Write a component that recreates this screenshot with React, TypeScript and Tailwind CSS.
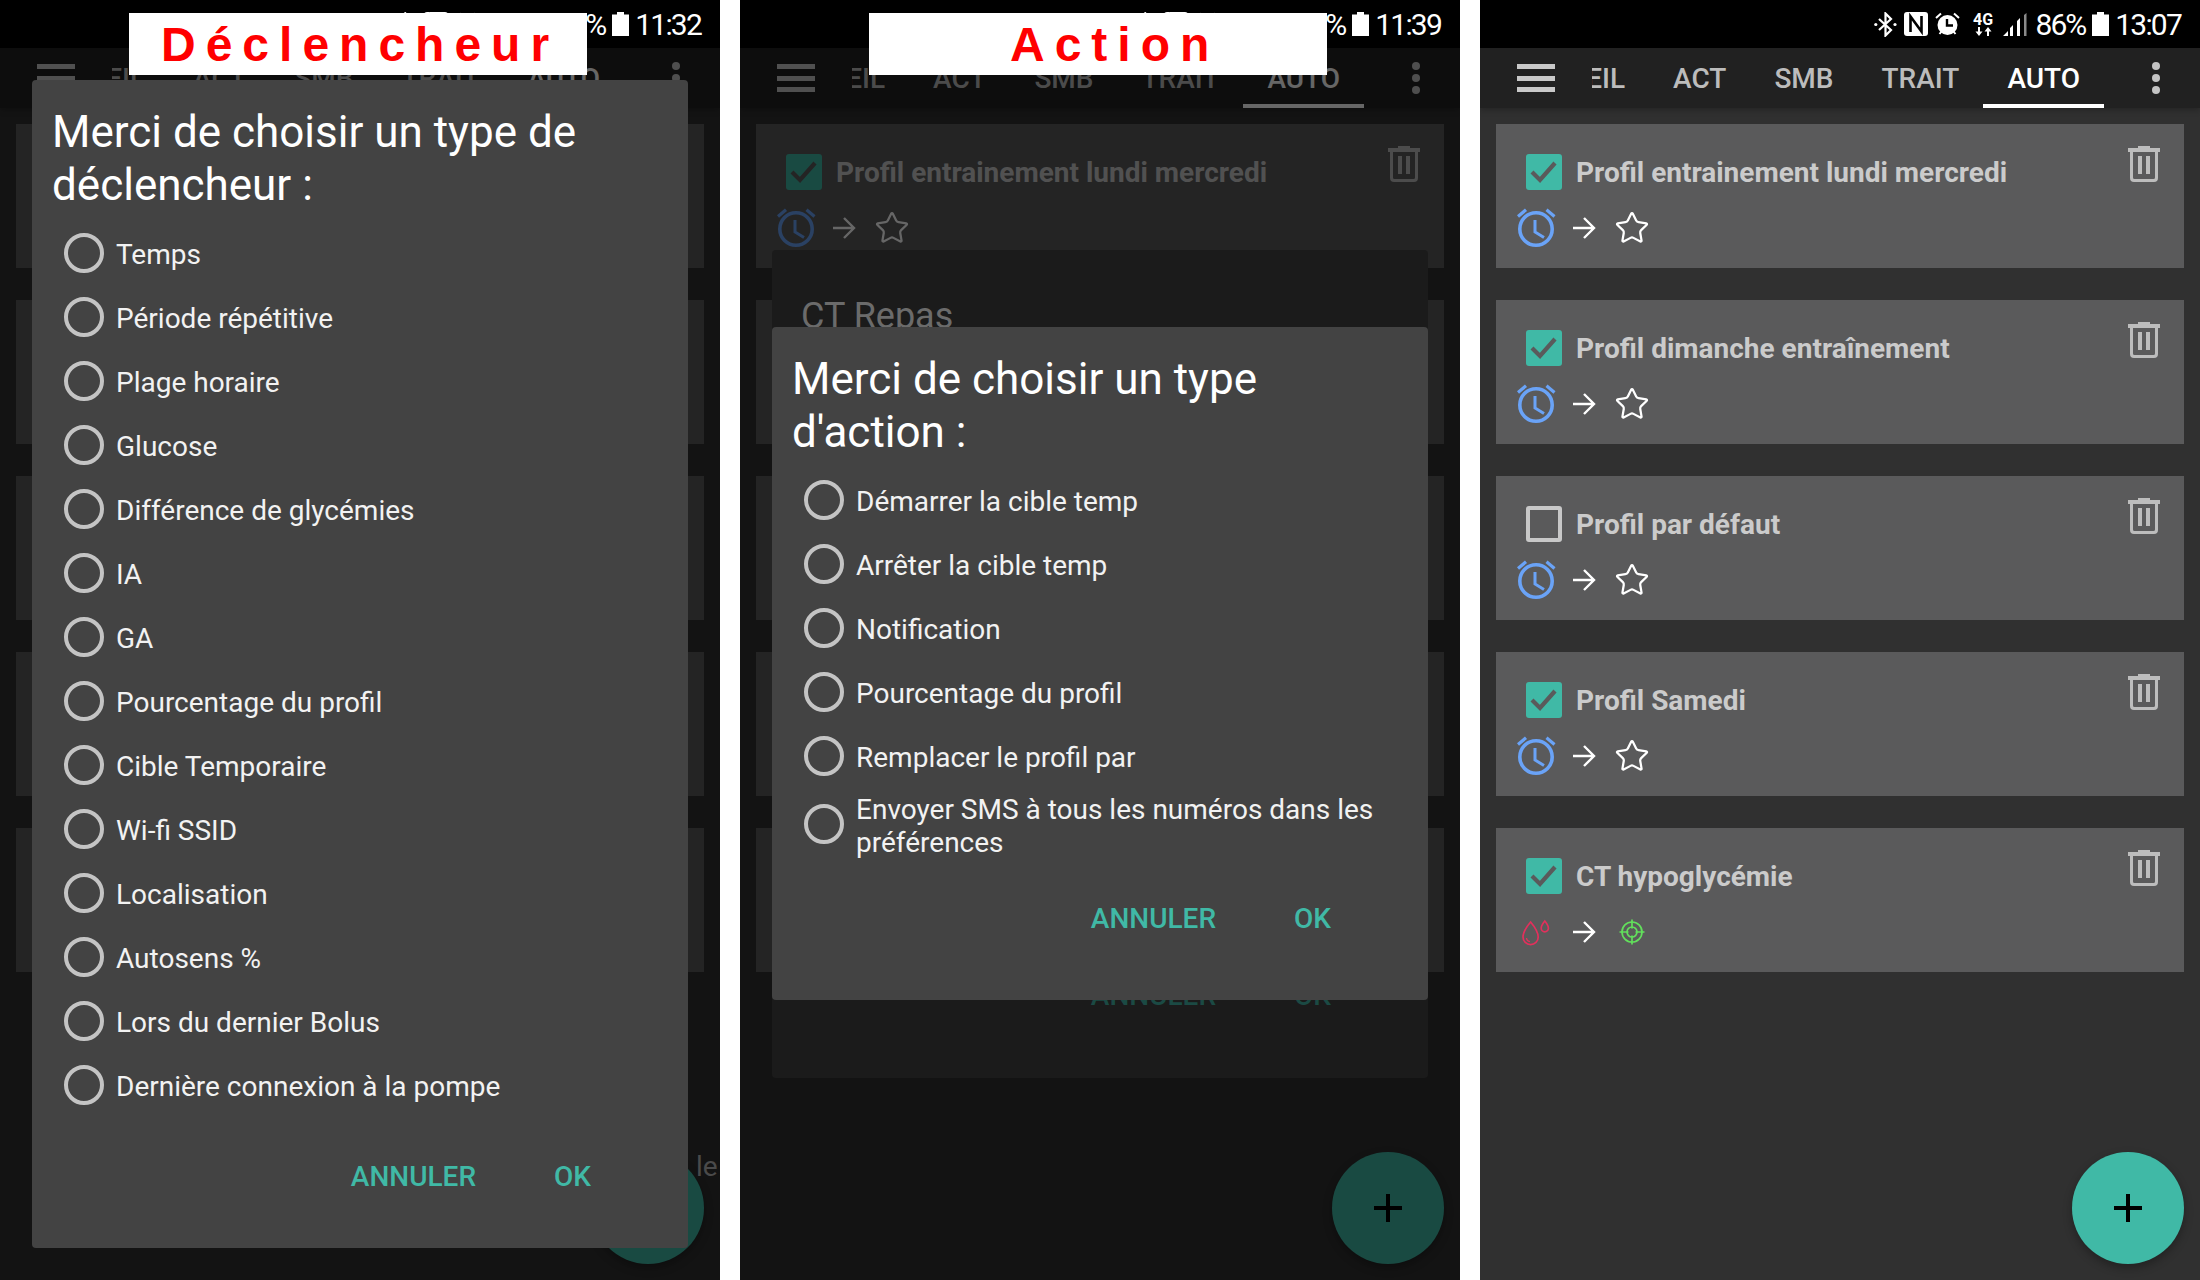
import { Star } from 'lucide-react'

const roboto = 'font-["Roboto",sans-serif]'

const cards = [
  { name: 'Profil entrainement lundi mercredi', on: true },
  { name: 'Profil dimanche entraînement', on: true },
  { name: 'Profil par défaut', on: false },
  { name: 'Profil Samedi', on: true },
  { name: 'CT hypoglycémie', on: true, hypo: true },
]

const tabs = ['ACCUEIL', 'ACT', 'SMB', 'TRAIT', 'AUTO']

const triggers = [
  'Temps',
  'Période répétitive',
  'Plage horaire',
  'Glucose',
  'Différence de glycémies',
  'IA',
  'GA',
  'Pourcentage du profil',
  'Cible Temporaire',
  'Wi-fi SSID',
  'Localisation',
  'Autosens %',
  'Lors du dernier Bolus',
  'Dernière connexion à la pompe',
]

const actions = [
  'Démarrer la cible temp',
  'Arrêter la cible temp',
  'Notification',
  'Pourcentage du profil',
  'Remplacer le profil par',
]

function AlarmIcon() {
  return (
    <svg width="40" height="40" viewBox="0 0 40 40" fill="none" stroke="#6aa3f7" strokeWidth="3.6">
      <circle cx="19" cy="22" r="16.2" />
      <path d="M1 9.5 9 2.8M29.5 2.8 37.5 9.5" strokeWidth="3.2" />
      <path d="M18 13v12l9 5.5" strokeWidth="3" />
    </svg>
  )
}

function DropsIcon() {
  return (
    <svg width="40" height="40" viewBox="0 0 40 40" fill="none" stroke="#e2305c" strokeWidth="1.7">
      <path d="M13.6 11C13.6 11 6 20 6 26a7.6 7.6 0 0 0 15.2 0C21.2 20 13.6 11 13.6 11Z" />
      <path d="M9.5 27a4 4 0 0 0 3.5 3.6" strokeWidth="1.2" />
      <path d="M27.8 10C27.8 10 24.2 14.5 24.2 17.2a3.6 3.6 0 0 0 7.2 0C31.4 14.5 27.8 10 27.8 10Z" />
    </svg>
  )
}

function ArrowIcon() {
  return (
    <svg width="24" height="24" viewBox="0 0 24 24" fill="none" stroke="white" strokeWidth="2.4">
      <path d="M1 12h21M12 2l10 10-10 10" />
    </svg>
  )
}

function TargetIcon() {
  return (
    <svg width="30" height="30" viewBox="0 0 30 30" fill="none" stroke="#62e05c" strokeWidth="1.7">
      <circle cx="15" cy="15" r="10" />
      <circle cx="15" cy="15" r="5" />
      <path d="M15 2.5v9M15 18.5v9M2.5 15h9M18.5 15h9" />
    </svg>
  )
}

function TrashIcon() {
  return (
    <svg width="32" height="36" viewBox="0 0 32 36" fill="#bdbdbd">
      <path d="M10 0h12v2h10v4H0V2h10z" />
      <path d="M2 6h3v25.5q0 1.5 1.5 1.5h19q1.5 0 1.5-1.5V6h3v26q0 4-4 4H6q-4 0-4-4z" />
      <path d="M10 10h4v18h-4zM18 10h4v18h-4z" />
    </svg>
  )
}

function CheckBox({ on }: { on: boolean }) {
  if (!on) {
    return <div className="w-[36px] h-[36px] shrink-0 rounded-[3px] border-4 border-[#c8c8c8]" />
  }
  return (
    <div className="w-[36px] h-[36px] shrink-0 rounded-[3px] bg-[#40b9a6] flex items-center justify-center">
      <svg width="28" height="24" viewBox="0 0 28 24" fill="none" stroke="#5a5a5b" strokeWidth="4.2">
        <path d="M2 12l8 8L25 3" />
      </svg>
    </div>
  )
}

function StatusBar({ time }: { time: string }) {
  return (
    <div className="h-[48px] bg-black flex items-center justify-end pr-[19px] text-white">
      <svg width="23" height="25" viewBox="0 0 23 25" fill="none" stroke="white" strokeWidth="2.2" className="mr-[7px]">
        <path d="M5 7l12 11-5.5 5.5V1.5L17 7 5 18" />
        <circle cx="1.8" cy="12.5" r="1.6" fill="white" stroke="none" />
        <circle cx="21" cy="12.5" r="1.6" fill="white" stroke="none" />
      </svg>
      <svg width="24" height="24" viewBox="0 0 24 24" className="mr-[7px]">
        <rect width="24" height="24" rx="3" fill="white" />
        <path d="M6.5 20V4.5L17.5 19.5V4" fill="none" stroke="black" strokeWidth="2.6" />
      </svg>
      <svg width="25" height="24" viewBox="0 0 25 24" className="mr-[14px]">
        <circle cx="12.5" cy="13" r="10" fill="white" />
        <path d="M1 6l5-4.5M19 1.5 24 6M4.5 22l2-2.5M20.5 22l-2-2.5" stroke="white" strokeWidth="2" />
        <path d="M12 7v6.5h6" fill="none" stroke="black" strokeWidth="2.4" />
      </svg>
      <div className={`${roboto} w-[19px] mr-[10px] flex flex-col items-center`}>
        <span className="text-[16px] font-bold leading-[14px]">4G</span>
        <svg width="17" height="9" viewBox="0 0 17 9" fill="white">
          <path d="M3 0h2v4.5h2.5L4 9 .5 4.500H3zM12 9h2V4.500h2.500L13 0 9.500 4.500H12z" />
        </svg>
      </div>
      <svg width="24" height="23" viewBox="0 0 24 23" className="mr-[9px]">
        <path d="M0 23l5-5v5zM7 23V15l3-3v11zM14 23V8l3-3v18z" fill="white" />
        <path d="M21 23V2l2.5-2v23z" fill="#8a8a8a" />
      </svg>
      <span className={`${roboto} pt-[1px] text-[30px] font-normal tracking-[-2px] leading-none`}>86%</span>
      <svg width="17" height="24" viewBox="0 0 17 24" className="ml-[7px] mr-[6px]">
        <path d="M5 0h7v2.500h5V24H0V2.500h5z" fill="white" />
      </svg>
      <span className={`${roboto} pt-[1px] text-[30px] font-normal tracking-[-1.8px] leading-none`}>{time}</span>
    </div>
  )
}

function Toolbar() {
  return (
    <div className="h-[60px] bg-[#212121] flex items-stretch shadow-[0_2px_6px_rgba(0,0,0,0.25)] relative">
      <div className="ml-[37px] w-[38px] my-[16px] flex flex-col justify-between">
        <div className="h-[5px] bg-[#c9c9c9]" />
        <div className="h-[5px] bg-[#c9c9c9]" />
        <div className="h-[5px] bg-[#c9c9c9]" />
      </div>
      <div className="ml-[37px] w-[512px] overflow-hidden flex justify-end">
        {tabs.map((tab) => (
          <div
            key={tab}
            className={`${roboto} shrink-0 px-[24px] pt-[2px] flex items-center border-y-4 border-t-transparent text-[28px] font-medium ${
              tab === 'AUTO' ? 'border-b-white text-white' : 'border-b-transparent text-[#bcbcbc]'
            }`}
          >
            {tab}
          </div>
        ))}
      </div>
      <div className="ml-[48px] flex flex-col justify-center gap-[4px]">
        <div className="w-[8px] h-[8px] rounded-full bg-[#c4c4c4]" />
        <div className="w-[8px] h-[8px] rounded-full bg-[#c4c4c4]" />
        <div className="w-[8px] h-[8px] rounded-full bg-[#c4c4c4]" />
      </div>
    </div>
  )
}

function ProfileCard({ name, on, hypo }: { name: string; on: boolean; hypo?: boolean }) {
  return (
    <div className="h-[144px] bg-[#5a5a5b] pt-[30px] relative">
      <div className="flex items-center pl-[30px]">
        <CheckBox on={on} />
        <span className={`${roboto} ml-[14px] pt-[2px] text-[28px] font-bold leading-[34px] text-[#cbcbcb]`}>{name}</span>
      </div>
      <div className="absolute right-[24px] top-[22px]">
        <TrashIcon />
      </div>
      <div className="mt-[17px] pl-[21px] h-[40px] flex items-center">
        {hypo ? <DropsIcon /> : <AlarmIcon />}
        <div className="ml-[15px] mt-[2px]">
          <ArrowIcon />
        </div>
        <div className="ml-[21px] mt-[2px] w-[30px] flex justify-center">
          {hypo ? <TargetIcon /> : <Star size={36} strokeWidth={1.5} color="white" className="shrink-0" />}
        </div>
      </div>
    </div>
  )
}

function Screen({ time }: { time: string }) {
  return (
    <>
      <StatusBar time={time} />
      <Toolbar />
      <div className="px-[16px] pt-[16px] flex flex-col gap-[32px]">
        {cards.map((card) => (
          <ProfileCard key={card.name} {...card} />
        ))}
      </div>
      <div className="absolute right-[16px] bottom-[16px] w-[112px] h-[112px] rounded-full bg-[#40b9a6] flex items-center justify-center shadow-[0_4px_10px_rgba(0,0,0,0.3)]">
        <svg width="28" height="28" viewBox="0 0 28 28" fill="black">
          <path d="M12 0h4v12h12v4H16v12h-4V16H0v-4h12z" />
        </svg>
      </div>
    </>
  )
}

function Radio({ label, wrapped }: { label: string; wrapped?: boolean }) {
  return (
    <div className="min-h-[64px] flex items-center">
      <div className="w-[40px] h-[40px] shrink-0 rounded-full border-4 border-[#c4c4c4]" />
      <span className={`ml-[12px] text-[28px] leading-[33px] text-[#f2f2f2] ${wrapped ? 'pt-[5px]' : 'pt-[2px]'}`}>
        {label}
      </span>
    </div>
  )
}

function Dialog({ title, options, className }: { title: string; options: string[]; className: string }) {
  return (
    <div className={`${roboto} absolute left-[32px] w-[656px] bg-[#434343] rounded-[4px] ${className}`}>
      <div className="pt-[26px] pb-[10px] px-[20px] text-[44px] leading-[52.5px] text-white">{title}</div>
      <div className="px-[32px]">
        {options.map((option) => (
          <Radio key={option} label={option} wrapped={option.length > 40} />
        ))}
      </div>
      <div className="mt-[40px] pr-[97px] flex justify-end gap-[78px] text-[28px] font-medium leading-[40px] text-[#40b9a6]">
        <span>ANNULER</span>
        <span>OK</span>
      </div>
    </div>
  )
}

function Banner({ text, className }: { text: string; className: string }) {
  return (
    <div
      className={`absolute top-[13px] w-[458px] h-[62px] pt-[2px] bg-white flex items-center font-["Liberation_Sans",sans-serif] text-[48px] font-bold tracking-[10px] leading-none text-[#ff0000] ${className}`}
    >
      {text}
    </div>
  )
}

function Dim() {
  return <div className="absolute left-0 right-0 top-[48px] bottom-0 bg-black/60" />
}

export default function App() {
  return (
    <div className="w-[2200px] h-[1280px] bg-white flex gap-[20px] overflow-hidden">
      {/* Trigger picker */}
      <div className="relative w-[720px] h-[1280px] bg-[#303030] overflow-hidden">
        <Screen time="11:32" />
        <Dim />
        <span className={`${roboto} absolute left-[696px] top-[1146px] text-[28px] text-[#4a4a4a]`}>le</span>
        <Dialog
          title="Merci de choisir un type de déclencheur :"
          options={triggers}
          className="top-[80px] h-[1168px]"
        />
        <Banner text="Déclencheur" className="left-[129px] pl-[32px]" />
      </div>

      {/* Action picker */}
      <div className="relative w-[720px] h-[1280px] bg-[#303030] overflow-hidden">
        <Screen time="11:39" />
        <Dim />
        <div className={`${roboto} absolute left-[32px] top-[250px] w-[656px] h-[828px] bg-[#1b1b1b] rounded-[4px]`}>
          <div className="pt-[40px] pl-[29px] text-[36px] leading-[52px] text-[#6b6b6b]">CT Repas</div>
          <div className="mt-[634px] pr-[97px] flex justify-end gap-[78px] text-[28px] font-medium leading-[40px] text-[#1b4a44]">
            <span>ANNULER</span>
            <span>OK</span>
          </div>
        </div>
        <Dialog
          title="Merci de choisir un type d'action :"
          options={[...actions, 'Envoyer SMS à tous les numéros dans les préférences']}
          className="top-[327px] h-[673px]"
        />
        <Banner text="Action" className="left-[129px] pl-[141px]" />
      </div>

      {/* Automation list */}
      <div className="relative w-[720px] h-[1280px] bg-[#303030] overflow-hidden">
        <Screen time="13:07" />
      </div>
    </div>
  )
}
